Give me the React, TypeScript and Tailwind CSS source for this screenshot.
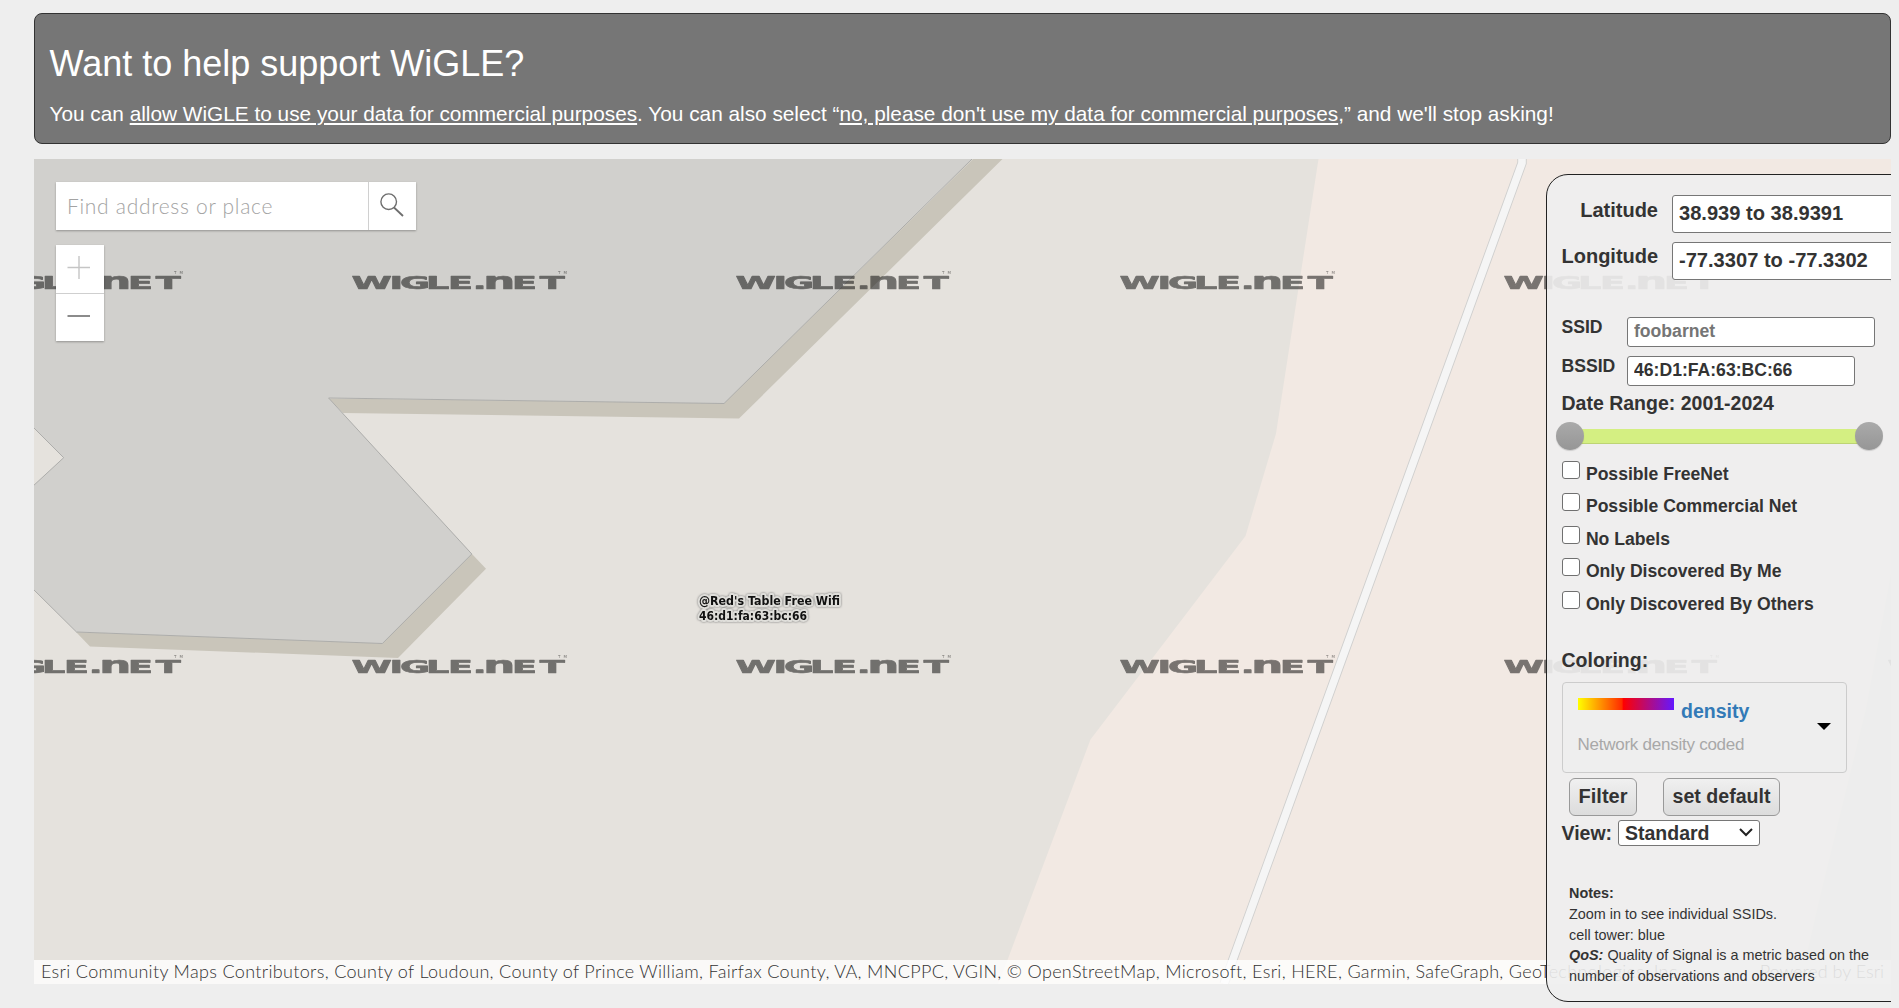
import React from "react";

const WATERMARK_X = [-66, 318, 702, 1086, 1470, 1854];
const WATERMARK_Y = [130, 514];

const FILTERS = [
  "Possible FreeNet",
  "Possible Commercial Net",
  "No Labels",
  "Only Discovered By Me",
  "Only Discovered By Others",
];

function Watermark({ x, y }: { x: number; y: number }) {
  return (
    <g transform={`translate(${x} ${y})`} fill="#000" stroke="#000" opacity="0.5">
      <text
        x="-0.3 18.7 24 37 48 60.4 65.6 80 93.9"
        fontFamily="'DejaVu Sans'"
        fontWeight="700"
        fontSize="18.3"
        strokeWidth="0.7"
        strokeLinejoin="round"
        transform="scale(2 1)"
      >
        WIGLE.
        <tspan fontSize="22.5">n</tspan>
        ET
      </text>
      <text x="206" y="-15" fontFamily="'DejaVu Sans'" fontSize="4" strokeWidth="0" textLength="9">
        TM
      </text>
    </g>
  );
}

function MapCanvas() {
  return (
    <svg className="block h-[825px] w-[1857px]" viewBox="0 0 1857 825">
      <rect width="1857" height="825" fill="#e5e2dd" />
      <path d="M1284.5 0 L1242 274.5 L1211.5 377 L1056.5 580.5 L973.5 801 L964 825 H1857 V0Z" fill="#f2e9e3" />
      <path d="M1857 415 L1832 550 L1786 738 L1766 825 H1857Z" fill="#dcdfdd" />
      <path
        d="M939 0 H968.5 L705 259.5 L309 254 L294.6 239.5 L690 244Z M438 395 L452 409.7 L364 499 L56 487.5 L42 473 L348 484Z"
        fill="#c9c5ba"
      />
      <path
        d="M-2 -2 H940 L690 244.5 L294.6 239 L437.8 395 L348.4 484.5 L42.5 473 L-2 429 V328 L29.7 298.7 L-2 267Z"
        fill="#d1d0cd"
        stroke="#adadab"
        strokeWidth="1"
      />
      <path d="M1488 -2 L1488 4 L1190 825" fill="none" stroke="#cfcfce" strokeWidth="9.4" />
      <path d="M1488 -2 L1488 4 L1190 825" fill="none" stroke="#f5f5f5" strokeWidth="7.6" />
      {WATERMARK_Y.map((y) => WATERMARK_X.map((x) => <Watermark key={`${x}-${y}`} x={x} y={y} />))}
      <g
        fontFamily="'DejaVu Sans'"
        fontSize="11.5"
        fontWeight="700"
        fill="#111"
        stroke="#dfdeda"
        strokeWidth="4"
        strokeLinejoin="round"
        paintOrder="stroke"
        style={{ filter: "drop-shadow(0 0 0.8px #777)" }}
      >
        <text x="665" y="446" textLength="141" lengthAdjust="spacingAndGlyphs">
          @Red's Table Free Wifi
        </text>
        <text x="665" y="461" textLength="108" lengthAdjust="spacingAndGlyphs">
          46:d1:fa:63:bc:66
        </text>
      </g>
    </svg>
  );
}

function MapControls() {
  return (
    <div className="absolute left-[22px] top-[23px] flex flex-col items-start gap-[15px] font-['Lato']">
      <div className="flex h-12 w-[360px] bg-white shadow-[0_1px_2px_rgba(0,0,0,0.3)]">
        <input
          className="w-[312px] pb-px pl-[11px] text-[21px] font-light tracking-[0.7px] outline-none placeholder:text-[#a3a3a3]"
          placeholder="Find address or place"
        />
        <button className="flex flex-1 items-center justify-center border-l border-[#d0d0d0] pb-[2px] pr-[2px]">
          <svg width="26" height="26" viewBox="0 0 26 26" fill="none" stroke="#6e6e6e" strokeWidth="1.4">
            <circle cx="9.7" cy="9.7" r="7.8" />
            <path d="M15 15.5 L24 24" strokeWidth="1.8" />
          </svg>
        </button>
      </div>
      <div className="flex w-12 flex-col bg-white shadow-[0_1px_2px_rgba(0,0,0,0.3)]">
        <button className="flex h-[49px] items-center justify-center border-b border-[#cfcfcf] pb-[2px] pr-[2px]">
          <svg width="24" height="24" viewBox="0 0 24 24" stroke="#c5c5c5" strokeWidth="1.4">
            <path d="M.5 11.5H23M12 0V23" />
          </svg>
        </button>
        <button className="flex h-[47px] items-center justify-center pr-[2px]">
          <svg width="24" height="24" viewBox="0 0 24 24" stroke="#6e6e6e" strokeWidth="1.6">
            <path d="M.5 10H23" />
          </svg>
        </button>
      </div>
    </div>
  );
}

function Panel() {
  const field = "rounded-[3px] border border-[#767676] bg-white pl-[6px] font-bold text-[#333] outline-none";
  return (
    <aside className="absolute left-[1512px] top-[15px] h-[828px] w-[420px] rounded-[22px] border border-[#222] bg-[#eee]/90 pl-[14.5px] pt-5 text-[20px] leading-6 font-bold text-[#333]">
      <div className="flex">
        <label className="mt-[3px] w-[96.5px] text-right">Latitude</label>
        <input
          className={`${field} ml-[14px] h-[38px] w-[250px] pb-[2px] text-[20.1px]`}
          defaultValue="38.939 to 38.9391"
        />
      </div>
      <div className="mt-[9px] flex">
        <label className="mt-[2px] w-[96.5px] text-right">Longitude</label>
        <input
          className={`${field} ml-[14px] h-[38px] w-[250px] pb-[2px] text-[20.1px]`}
          defaultValue="-77.3307 to -77.3302"
        />
      </div>
      <div className="mt-[37px] flex text-[17.6px]">
        <label className="-mt-[2px] w-[65.5px]">SSID</label>
        <input className={`${field} h-[30px] w-[248px] pb-[2px] placeholder:text-[#757575]`} placeholder="foobarnet" />
      </div>
      <div className="mt-[9px] flex text-[17.6px]">
        <label className="-mt-[2px] w-[65.5px]">BSSID</label>
        <input className={`${field} h-[30px] w-[228px] pb-[2px]`} defaultValue="46:D1:FA:63:BC:66" />
      </div>
      <div className="mt-[5px] text-[19.5px]">Date Range: 2001-2024</div>
      <div className="-ml-[6px] mt-[7px] flex h-7 w-[327px] items-center justify-between">
        <span className="z-10 size-7 rounded-full bg-linear-to-b from-[#aaa] to-[#969696] shadow-[0_1px_1px_rgba(0,0,0,0.15)]" />
        <span className="-mx-[14px] h-[15px] flex-1 bg-[#d4ef82] shadow-[inset_0_-1px_0_#bdd474]" />
        <span className="z-10 size-7 rounded-full bg-linear-to-b from-[#aaa] to-[#969696] shadow-[0_1px_1px_rgba(0,0,0,0.15)]" />
      </div>
      <div className="mt-[10.7px] text-[17.6px]">
        {FILTERS.map((f) => (
          <label key={f} className="flex h-[32.5px] items-start gap-[6.4px]">
            <input type="checkbox" className="size-[18px] appearance-none rounded-[3px] border border-[#707070] bg-white" />
            <span className="mt-[1.3px]">{f}</span>
          </label>
        ))}
      </div>
      <div className="mt-[24.8px] text-[19.5px]">Coloring:</div>
      <div className="mt-[10px] flex h-[91px] w-[285px] items-center justify-between rounded border border-[#ccc] bg-[#eee] pl-[15px] pr-[15px] pt-px">
        <div>
          <div className="flex gap-[7.5px]">
            <span className="-mt-px h-3 w-24 bg-[linear-gradient(to_right,#ffff00,#ff2a00_46%,#ff0000_47%,#6418ff)]" />
            <span className="text-[19.5px] text-[#337ab7]">density</span>
          </div>
          <div className="mt-[10px] text-[17px] font-normal tracking-[-0.25px] text-[#a8a8a8]">Network density coded</div>
        </div>
        <svg className="mb-[3px]" width="14" height="7" viewBox="0 0 14 7">
          <path d="M0 0H14L7 7Z" fill="#000" />
        </svg>
      </div>
      <div className="ml-[7.5px] mt-[5px] flex gap-[26px]">
        <button className="h-[38px] w-[68px] rounded-md border border-[#999] bg-linear-to-b from-[#f0f0f0] to-[#dcdcdc] pb-[2px]">
          Filter
        </button>
        <button className="h-[38px] w-[117px] rounded-md border border-[#999] bg-linear-to-b from-[#f0f0f0] to-[#dcdcdc] pb-[2px] text-[19.6px]">
          set default
        </button>
      </div>
      <div className="mt-1 flex h-[26px] items-center">
        <span className="w-[56.5px] text-[19.5px]">View:</span>
        <div className="flex h-[26px] w-[142px] items-center justify-between rounded-[3px] border border-[#767676] bg-white pl-[6px] pr-[6px]">
          <span className="text-[19.5px]">Standard</span>
          <svg width="14" height="9" viewBox="0 0 14 9" fill="none" stroke="#222" strokeWidth="2">
            <path d="M1 1L7 7L13 1" />
          </svg>
        </div>
      </div>
      <div className="ml-[7.5px] mt-[37px] w-[310px] text-[14.4px] leading-[20.8px] font-normal">
        <b>Notes:</b>
        <br />
        Zoom in to see individual SSIDs.
        <br />
        cell tower: blue
        <br />
        <b>
          <i>QoS:</i>
        </b>{" "}
        Quality of Signal is a metric based on the number of observations and observers
      </div>
    </aside>
  );
}

export default function App() {
  return (
    <div className="h-[1008px] overflow-hidden bg-[#eee] pl-[34px] pr-2 pt-[13px] font-['Liberation_Sans',Arial,sans-serif]">
      <header className="h-[131px] rounded-lg border border-[#333] bg-[#767676] pl-[14.5px] text-white">
        <h1 className="mt-[30px] text-[36px] leading-10">Want to help support WiGLE?</h1>
        <p className="mt-[18px] text-[20.8px] leading-6">
          You can{" "}
          <a className="underline" href="#allow">
            allow WiGLE to use your data for commercial purposes
          </a>
          . You can also select “
          <a className="underline" href="#deny">
            no, please don't use my data for commercial purposes
          </a>
          ,” and we'll stop asking!
        </p>
      </header>
      <main className="relative mt-[15px] h-[849px] w-[1857px] overflow-hidden">
        <MapCanvas />
        <MapControls />
        <div className="absolute left-0 top-[801px] flex h-6 w-full justify-between bg-white/80 px-[7px] font-['Lato'] text-[18px] leading-[23px] font-light tracking-[0.33px] text-[#323232]">
          <span className="w-[1672px] truncate">
            Esri Community Maps Contributors, County of Loudoun, County of Prince William, Fairfax County, VA, MNCPPC,
            VGIN, © OpenStreetMap, Microsoft, Esri, HERE, Garmin, SafeGraph, GeoTechnologies, Inc, METI/NASA, USGS
          </span>
          <span className="tracking-normal">Powered by Esri</span>
        </div>
        <Panel />
      </main>
    </div>
  );
}
